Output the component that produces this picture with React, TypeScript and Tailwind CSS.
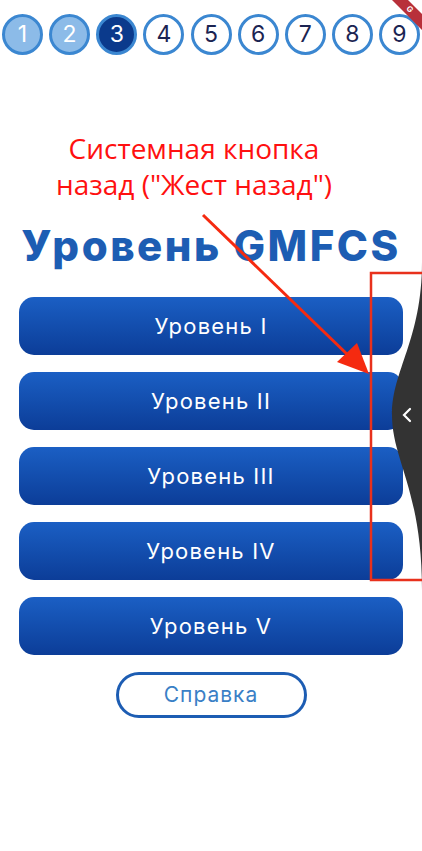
import React from "react";

// GMFCS level picker with the step strip on top and the annotated back-gesture overlay.

const STEPS = [1, 2, 3, 4, 5, 6, 7, 8, 9];
const LEVELS = ["Уровень I", "Уровень II", "Уровень III", "Уровень IV", "Уровень V"];

function stepClass(n: number) {
  if (n < 3) return "bg-[#8cbbe8] text-white";
  if (n === 3) return "bg-[#0b3a8c] border-[#0b3a8c] text-white";
  return "bg-white text-[#1b2452]";
}

export default function App() {
  return (
    <div className="relative h-[851px] w-[422px] overflow-hidden bg-white font-['Inter',sans-serif]">
      <div className="flex justify-between px-[2px] pt-[14px]">
        {STEPS.map((n) => (
          <div
            key={n}
            className={`flex h-[41px] w-[41px] items-center justify-center rounded-full border-[3px] border-[#3b87d1] text-[23px] font-normal ${stepClass(n)}`}
          >
            {n}
          </div>
        ))}
      </div>

      <div className="mt-[75px] text-center font-['Open_Sans',sans-serif] text-[28px] leading-[36px] text-[#ff1010]">
        <p className="pr-[34px]">Системная кнопка</p>
        <p className="pr-[34px]">назад ("Жест назад")</p>
      </div>

      <h1 className="mt-[20px] text-center text-[42px] leading-[48px] font-extrabold tracking-[2.5px] text-[#1d5db3]">
        Уровень GMFCS
      </h1>

      <div className="mt-[27px] flex flex-col gap-[17px] px-[19px]">
        {LEVELS.map((l) => (
          <button
            key={l}
            className="h-[58px] w-full rounded-[15px] bg-gradient-to-b from-[#1b5fc4] to-[#0c3d98] text-[22px] font-normal tracking-[1.2px] text-white"
          >
            {l}
          </button>
        ))}
      </div>

      <div className="mt-[17px] flex justify-center">
        <button className="h-[46px] w-[191px] rounded-full border-[3px] border-[#1d5db3] bg-white text-[21px] font-normal tracking-[1px] text-[#3a7fc6]">
          Справка
        </button>
      </div>

      {/* annotation overlay: arrow, highlight box, back gesture bubble */}
      <svg className="pointer-events-none absolute left-0 top-0" width="422" height="851">
        <path
          d="M422 262 C 422 340, 392 370, 392 415 C 392 460, 422 490, 422 590 Z"
          fill="#333"
        />
        <path d="M410 409 L404 415 L410 421" stroke="#fff" strokeWidth="2.2" fill="none" strokeLinecap="round" />
        <line x1="203" y1="215" x2="350" y2="357" stroke="#f52a10" strokeWidth="3" />
        <polygon points="369,374 337,362 357,343" fill="#f52a10" />
        <rect x="371" y="273" width="60" height="307" fill="none" stroke="#e8311c" strokeWidth="2.5" />
        <polygon points="392,0 408,0 422,14 422,30" fill="#b8303a" />
        <text
          x="410"
          y="12"
          textAnchor="middle"
          fontSize="8"
          fontWeight="700"
          fill="#fff"
          fontFamily="Inter, sans-serif"
          transform="rotate(45 410 9)"
        >
          G
        </text>
      </svg>
    </div>
  );
}
